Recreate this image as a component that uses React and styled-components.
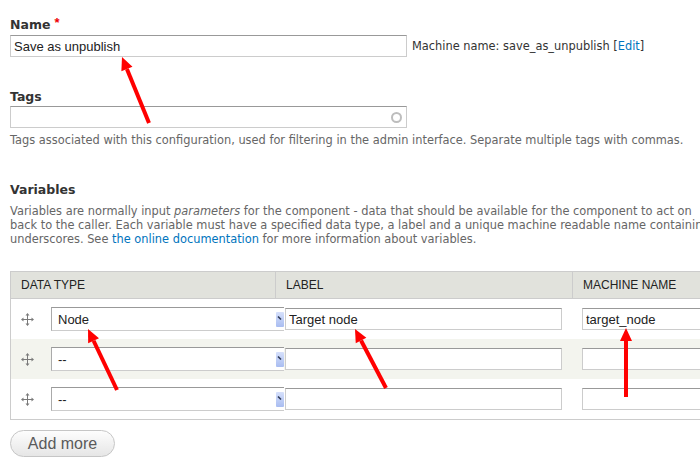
import React from "react"
import styled, { createGlobalStyle } from "styled-components"

const GlobalStyle = createGlobalStyle`
  html, body {
    margin: 0;
    padding: 0;
    background: #fff;
  }
`

const Page = styled.div`
  position: relative;
  width: 700px;
  height: 470px;
  overflow: hidden;
  padding-left: 10px;
  box-sizing: border-box;
  font-family: "DejaVu Sans", sans-serif;
  font-size: 11.4px;
  color: #333;
`

const Label = styled.div`
  margin: ${({ $top }) => $top}px 0 ${({ $bottom }) => $bottom}px;
  font: bold 12.5px/16px "DejaVu Sans", sans-serif;
  color: #333;
`

const Req = styled.span`
  margin-left: 4px;
  color: #e00;
  font: bold 13px "Liberation Sans", sans-serif;
  line-height: 0;
  vertical-align: 2px;
`

const NameRow = styled.div`
  display: flex;
  align-items: center;
  gap: 5px;
`

const TextInput = styled.input`
  box-sizing: border-box;
  width: ${({ $w }) => $w}px;
  height: 22px;
  margin: 0;
  padding: 0 3px;
  border: 1px solid #ccc;
  border-top-color: #999;
  border-radius: 0;
  background: #fff;
  font: 13px "Liberation Sans", sans-serif;
  color: #222;
  outline: none;
`

const MachineName = styled.span`
  color: #333;
  white-space: nowrap;
`

const Link = styled.a`
  color: #0074bd;
  text-decoration: none;
`

const AutoField = styled.div`
  box-sizing: border-box;
  width: 397px;
  height: 22px;
  display: flex;
  align-items: center;
  justify-content: flex-end;
  padding-right: 4px;
  border: 1px solid #ccc;
  border-top-color: #999;
`

const Throbber = styled.span`
  box-sizing: border-box;
  width: 11px;
  height: 11px;
  border: 2px solid #bdbdbd;
  border-radius: 50%;
`

const Description = styled.div`
  margin-top: 5px;
  line-height: 14px;
  color: #666;
  white-space: nowrap;
`

const Heading = styled.div`
  margin-top: 35px;
  font: bold 12.5px/16px "DejaVu Sans", sans-serif;
  color: #333;
`

const Para = styled.p`
  margin: 6px 0 0;
  line-height: 14px;
  color: #666;
  white-space: nowrap;
`

const Table = styled.div`
  margin-top: 25px;
  width: 740px;
  border: 1px solid #ccc;
  border-right: none;
`

const Grid = styled.div`
  display: grid;
  grid-template-columns: 264px 297px 1fr;
  background: ${({ $shade }) => ($shade ? "#f3f4ee" : "#fff")};
`

const HeadRow = styled(Grid)`
  height: 26px;
  background: #e1e2dc;
  border-bottom: 1px solid #ccc;
`

const HeadCell = styled.div`
  display: flex;
  align-items: center;
  padding-left: 10px;
  border-left: ${({ $first }) => ($first ? "none" : "1px solid #ccc")};
  font: 12px "Liberation Sans", sans-serif;
  color: #222;
  text-transform: uppercase;
`

const Row = styled(Grid)`
  height: 40px;
`

const Cell = styled.div`
  display: flex;
  align-items: center;
  padding-left: ${({ $pad }) => $pad}px;
`

const Handle = styled.span`
  display: flex;
  width: 14px;
  margin-right: 17px;
  justify-content: center;
`

const Select = styled.div`
  position: relative;
  z-index: 0;
  flex: none;
  box-sizing: border-box;
  width: 233px;
  height: 24px;
  display: flex;
  align-items: center;
  justify-content: space-between;
  padding-left: 6px;
  border: 1px solid #aaa;
  border-top-color: #999;
  border-bottom-color: #ccc;
  border-right: none;
  background: #fff;
  font: 13px "Liberation Sans", sans-serif;
  color: #222;
`

const CellInput = styled(TextInput)`
  position: relative;
  z-index: 1;
`

const Button = styled.button`
  margin-top: 10px;
  width: 105px;
  height: 27px;
  border: 1px solid #c6c6c6;
  border-radius: 14px;
  background: linear-gradient(#fdfdfd, #e6e6e6);
  font: 16px "Liberation Sans", sans-serif;
  color: #5a5a5a;
  padding: 0;
`

const Overlay = styled.svg`
  position: absolute;
  z-index: 2;
  left: 0;
  top: 0;
  pointer-events: none;
`

function DragIcon() {
  return (
    <svg width="13" height="13" viewBox="0 0 13 13">
      <path d="M6.5 2v9M2 6.5h9" stroke="#7a7a7a" strokeWidth="1" />
      <path d="M6.5 0L4.5 2.5h4zM6.5 13l-2-2.5h4zM0 6.5l2.5-2v4zM13 6.5l-2.5-2v4z" fill="#7a7a7a" />
    </svg>
  )
}

function SelectArrow() {
  return (
    <svg width="8" height="15" viewBox="0 0 8 15">
      <defs>
        <linearGradient id="sa" x1="0" y1="0" x2="0" y2="1">
          <stop offset="0" stopColor="#d6e0fb" />
          <stop offset="1" stopColor="#a9bdf1" />
        </linearGradient>
      </defs>
      <rect x="0" y="0" width="8" height="15" rx="1" fill="url(#sa)" />
      <path d="M2 4.5l3 3" stroke="#2e3a55" strokeWidth="1.6" />
    </svg>
  )
}

function Arrow({ x1, y1, x2, y2 }) {
  const len = Math.hypot(x2 - x1, y2 - y1)
  const ux = (x2 - x1) / len
  const uy = (y2 - y1) / len
  const bx = x2 - ux * 13
  const by = y2 - uy * 13
  const pts = [
    [x2, y2],
    [bx - uy * 6, by + ux * 6],
    [bx + uy * 6, by - ux * 6],
  ]
    .map((p) => p.join(","))
    .join(" ")
  return (
    <g>
      <line x1={x1} y1={y1} x2={bx} y2={by} stroke="#f00" strokeWidth="4" />
      <polygon points={pts} fill="#f00" />
    </g>
  )
}

const rows = [
  { type: "Node", label: "Target node", machine: "target_node" },
  { type: "--", label: "", machine: "" },
  { type: "--", label: "", machine: "" },
]

const arrows = [
  { x1: 149, y1: 123, x2: 122, y2: 57 },
  { x1: 117, y1: 390, x2: 88, y2: 329 },
  { x1: 386, y1: 388, x2: 355, y2: 329 },
  { x1: 626, y1: 397, x2: 626, y2: 328 },
]

export default function App() {
  return (
    <Page>
      <GlobalStyle />
      <Label $top={17} $bottom={2}>
        Name<Req>*</Req>
      </Label>
      <NameRow>
        <TextInput $w={397} readOnly value="Save as unpublish" />
        <MachineName>
          Machine name: save_as_unpublish [<Link href="#">Edit</Link>]
        </MachineName>
      </NameRow>

      <Label $top={32} $bottom={1}>Tags</Label>
      <AutoField>
        <Throbber />
      </AutoField>
      <Description>
        Tags associated with this configuration, used for filtering in the admin interface. Separate multiple tags with commas.
      </Description>

      <Heading>Variables</Heading>
      <Para>
        Variables are normally input <em>parameters</em> for the component - data that should be available for the component to act on
        <br />
        back to the caller. Each variable must have a specified data type, a label and a unique machine readable name containing only lowercase alphanumeric characters and
        <br />
        underscores. See <Link href="#">the online documentation</Link> for more information about variables.
      </Para>

      <Table>
        <HeadRow>
          <HeadCell $first>Data type</HeadCell>
          <HeadCell>Label</HeadCell>
          <HeadCell>Machine name</HeadCell>
        </HeadRow>
        {rows.map((r, i) => (
          <Row key={i} $shade={i % 2 === 1}>
            <Cell $pad={10}>
              <Handle>
                <DragIcon />
              </Handle>
              <Select>
                <span>{r.type}</span>
                <SelectArrow />
              </Select>
            </Cell>
            <Cell $pad={10}>
              <CellInput $w={277} readOnly value={r.label} />
            </Cell>
            <Cell $pad={10}>
              <CellInput $w={160} readOnly value={r.machine} />
            </Cell>
          </Row>
        ))}
      </Table>

      <Button>Add more</Button>

      <Overlay width="700" height="470">
        {arrows.map((a, i) => (
          <Arrow key={i} {...a} />
        ))}
      </Overlay>
    </Page>
  )
}
